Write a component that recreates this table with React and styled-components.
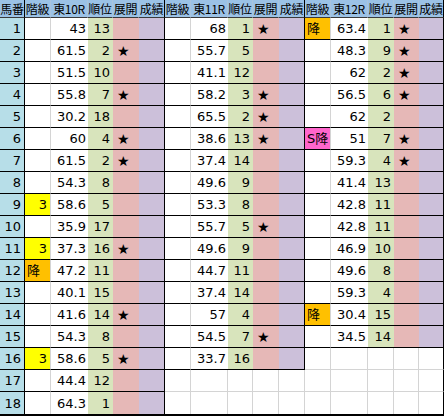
import React from 'react';
import styled, { createGlobalStyle, css } from 'styled-components';

const Global = createGlobalStyle`
  html, body { margin: 0; padding: 0; background: #ffffff; }
  body { font-family: "DejaVu Sans", "Noto Sans CJK JP", sans-serif; }
`;

const COLORS = {
  header: '#9bc2e6',
  num: '#b7dee8',
  rank: '#d8e4bc',
  tenkai: '#e6b8b7',
  result: '#ccc0da',
  yellow: '#ffff00',
  orange: '#ffc000',
  pink: '#ff66cc',
  grid: '#d4d4d4',
  line: '#000000',
};

const Sheet = styled.div`
  display: grid;
  grid-template-columns:
    25px
    26px 37px 25px 26px 26px
    26px 37px 25px 26px 26px
    26px 37px 26px 25px 25px;
  grid-template-rows: 18px;
  grid-auto-rows: 22px;
  width: 444px;
  border-bottom: 2px solid #000;
`;

const borderFor = (kind) =>
  kind === 'line' ? `1px solid ${COLORS.line}` : kind === 'grid' ? `1px solid ${COLORS.grid}` : 'none';

const HeadCell = styled.div`
  box-sizing: border-box;
  display: flex;
  align-items: center;
  justify-content: center;
  background: ${COLORS.header};
  font-family: "Noto Sans CJK JP", "DejaVu Sans", sans-serif;
  font-size: 12px;
  letter-spacing: -0.3px;
  line-height: 1;
  color: #000;
  white-space: nowrap;
  border-bottom: 1px solid #3a3a3a;
  border-right: 1px solid ${(p) => (p.$edge ? COLORS.line : '#a9c4de')};
`;

const Cell = styled.div`
  box-sizing: border-box;
  display: flex;
  align-items: center;
  font-size: 13px;
  line-height: 1;
  color: #000;
  white-space: nowrap;
  overflow: hidden;
  border-bottom: ${(p) => borderFor(p.$bottom)};
`;

const NumCell = styled(Cell)`
  justify-content: flex-end;
  padding-right: 3px;
  background: ${COLORS.num};
  border-right: 1px solid ${COLORS.line};
`;

const GradeCell = styled(Cell)`
  background: ${(p) => p.$fill || '#ffffff'};
  border-right: 1px solid ${COLORS.grid};
  ${(p) =>
    p.$right
      ? css`justify-content: flex-end; padding-right: 3px;`
      : css`justify-content: flex-start; padding-left: 2px;`}
`;

const ScoreCell = styled(Cell)`
  justify-content: flex-end;
  padding-right: 2px;
  background: #ffffff;
`;

const RankCell = styled(Cell)`
  justify-content: flex-end;
  padding-right: 3px;
  background: ${COLORS.rank};
`;

const TenkaiCell = styled(Cell)`
  justify-content: flex-start;
  padding-left: 4px;
  font-size: 14px;
  background: ${COLORS.tenkai};
`;

const ResultCell = styled(Cell)`
  background: ${COLORS.result};
  border-right: 1px solid ${COLORS.line};
`;

const BlankCell = styled(Cell)`
  background: #ffffff;
  border-right: 1px solid ${(p) => (p.$edge ? COLORS.line : COLORS.grid)};
`;

const g1 = [
  [null, '43', '13', 0],
  [null, '61.5', '2', 1],
  [null, '51.5', '10', 0],
  [null, '55.8', '7', 1],
  [null, '30.2', '18', 0],
  [null, '60', '4', 1],
  [null, '61.5', '2', 1],
  [null, '54.3', '8', 0],
  ['3', '58.6', '5', 0],
  [null, '35.9', '17', 0],
  ['3', '37.3', '16', 1],
  ['降', '47.2', '11', 0],
  [null, '40.1', '15', 0],
  [null, '41.6', '14', 1],
  [null, '54.3', '8', 0],
  ['3', '58.6', '5', 1],
  [null, '44.4', '12', 0],
  [null, '64.3', '1', 0],
];

const g2 = [
  [null, '68', '1', 1],
  [null, '55.7', '5', 0],
  [null, '41.1', '12', 0],
  [null, '58.2', '3', 1],
  [null, '65.5', '2', 1],
  [null, '38.6', '13', 1],
  [null, '37.4', '14', 0],
  [null, '49.6', '9', 0],
  [null, '53.3', '8', 0],
  [null, '55.7', '5', 1],
  [null, '49.6', '9', 0],
  [null, '44.7', '11', 0],
  [null, '37.4', '14', 0],
  [null, '57', '4', 0],
  [null, '54.5', '7', 1],
  [null, '33.7', '16', 0],
];

const g3 = [
  ['降', '63.4', '1', 1],
  [null, '48.3', '9', 1],
  [null, '62', '2', 1],
  [null, '56.5', '6', 1],
  [null, '62', '2', 0],
  ['S降', '51', '7', 1],
  [null, '59.3', '4', 1],
  [null, '41.4', '13', 0],
  [null, '42.8', '11', 0],
  [null, '42.8', '11', 0],
  [null, '46.9', '10', 0],
  [null, '49.6', '8', 0],
  [null, '59.3', '4', 0],
  ['降', '30.4', '15', 0],
  [null, '34.5', '14', 0],
];

const groups = [
  { race: '東10R', rows: g1 },
  { race: '東11R', rows: g2 },
  { race: '東12R', rows: g3 },
];

const gradeFill = (g) => (g === '3' ? COLORS.yellow : g === '降' ? COLORS.orange : g === 'S降' ? COLORS.pink : null);

const TOTAL = 18;

export default function App() {
  const cells = [];
  cells.push(<HeadCell key="h-num" $edge>馬番</HeadCell>);
  groups.forEach((g, gi) => {
    ['階級', g.race, '順位', '展開', '成績'].forEach((t, ti) => {
      cells.push(
        <HeadCell key={`h-${gi}-${ti}`} $edge={ti === 4}>
          {t}
        </HeadCell>
      );
    });
  });

  for (let r = 0; r < TOTAL; r++) {
    const last = r === TOTAL - 1;
    cells.push(
      <NumCell key={`n-${r}`} $bottom={last ? 'none' : 'line'}>
        {r + 1}
      </NumCell>
    );
    groups.forEach((g, gi) => {
      const row = g.rows[r];
      if (row) {
        const bottom = last ? 'none' : 'line';
        const [grade, score, rank, star] = row;
        cells.push(
          <GradeCell key={`g-${gi}-${r}`} $bottom={bottom} $fill={gradeFill(grade)} $right={grade === '3'}>
            {grade}
          </GradeCell>,
          <ScoreCell key={`s-${gi}-${r}`} $bottom={bottom}>{score}</ScoreCell>,
          <RankCell key={`r-${gi}-${r}`} $bottom={bottom}>{rank}</RankCell>,
          <TenkaiCell key={`t-${gi}-${r}`} $bottom={bottom}>{star ? '★' : ''}</TenkaiCell>,
          <ResultCell key={`x-${gi}-${r}`} $bottom={bottom} />
        );
      } else {
        const bottom = last ? 'none' : 'grid';
        for (let c = 0; c < 5; c++) {
          cells.push(
            <BlankCell
              key={`b-${gi}-${r}-${c}`}
              $bottom={bottom}
              $edge={c === 4 && gi === groups.length - 1}
            />
          );
        }
      }
    });
  }

  return (
    <>
      <Global />
      <Sheet>{cells}</Sheet>
    </>
  );
}
